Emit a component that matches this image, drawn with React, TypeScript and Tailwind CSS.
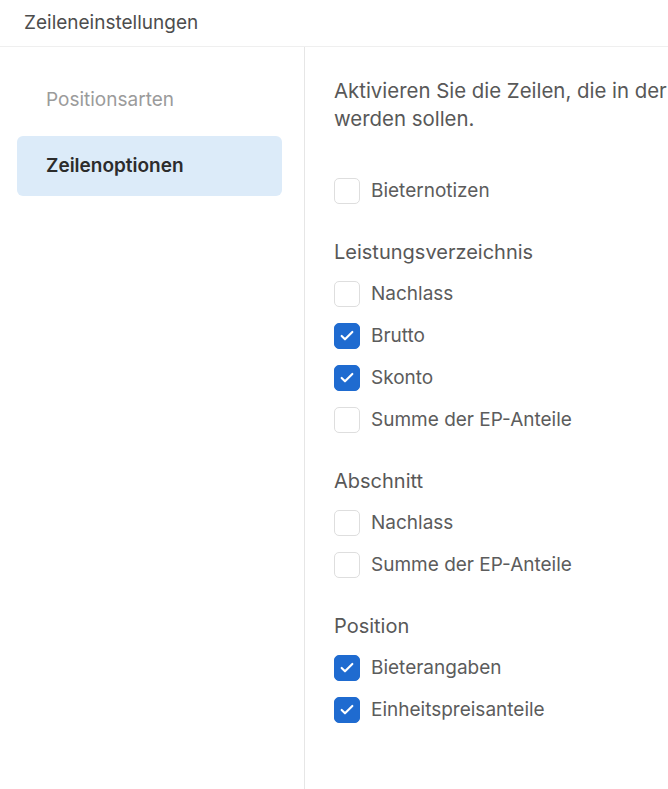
import { Check } from "lucide-react";

type Row = { label: string; checked: boolean };
type Group = { title?: string; rows: Row[] };

const groups: Group[] = [
  { rows: [{ label: "Bieternotizen", checked: false }] },
  {
    title: "Leistungsverzeichnis",
    rows: [
      { label: "Nachlass", checked: false },
      { label: "Brutto", checked: true },
      { label: "Skonto", checked: true },
      { label: "Summe der EP-Anteile", checked: false },
    ],
  },
  {
    title: "Abschnitt",
    rows: [
      { label: "Nachlass", checked: false },
      { label: "Summe der EP-Anteile", checked: false },
    ],
  },
  {
    title: "Position",
    rows: [
      { label: "Bieterangaben", checked: true },
      { label: "Einheitspreisanteile", checked: true },
    ],
  },
];

function Checkbox({ checked }: { checked: boolean }) {
  return (
    <span
      className={`flex h-[26px] w-[26px] shrink-0 items-center justify-center rounded-[5px] border ${
        checked ? "border-[#1f6bd0] bg-[#1f6bd0]" : "border-[#dedede] bg-white"
      }`}
    >
      {checked && <Check size={16} strokeWidth={3.2} className="text-white" />}
    </span>
  );
}

export default function App() {
  return (
    <div className="flex h-[789px] w-[668px] flex-col overflow-hidden bg-white font-['Inter',sans-serif] text-[#585858]">
      <header className="flex h-[47px] shrink-0 items-center border-b border-[#efefef] px-6">
        <h1 className="text-[19px] text-[#4d4d4d]">Zeileneinstellungen</h1>
      </header>

      <div className="flex flex-1">
        <nav className="flex w-[305px] shrink-0 flex-col gap-[6px] border-r border-[#e6e6e6] pl-[17px] pr-[22px] pt-[23px]">
          <button
            type="button"
            className="flex h-[60px] items-center rounded-[6px] pl-[29px] text-left text-[19px] text-[#9b9b9b]"
          >
            Positionsarten
          </button>
          <button
            type="button"
            className="flex h-[60px] items-center rounded-[6px] bg-[#dcebf9] pl-[29px] text-left text-[19px] font-semibold text-[#2c2c2c]"
          >
            Zeilenoptionen
          </button>
        </nav>

        <section className="w-[520px] shrink-0 pl-[29px] pt-[30px]">
          <p className="mb-[37px] whitespace-nowrap text-[20.4px] leading-[28px] text-[#585858]">
            Aktivieren Sie die Zeilen, die in der Übersicht angezeigt
            <br />
            werden sollen.
          </p>

          <div className="flex flex-col gap-[19px]">
            {groups.map((g, i) => (
              <div key={i} className="flex flex-col">
                {g.title && (
                  <div className="flex h-[42px] items-center pb-[1px] text-[20px] text-[#585858]">{g.title}</div>
                )}
                {g.rows.map((r) => (
                  <label key={r.label} className="flex h-[42px] items-center gap-[11px]">
                    <Checkbox checked={r.checked} />
                    <span className="text-[19px] text-[#5c5c5c]">{r.label}</span>
                  </label>
                ))}
              </div>
            ))}
          </div>
        </section>
      </div>
    </div>
  );
}
